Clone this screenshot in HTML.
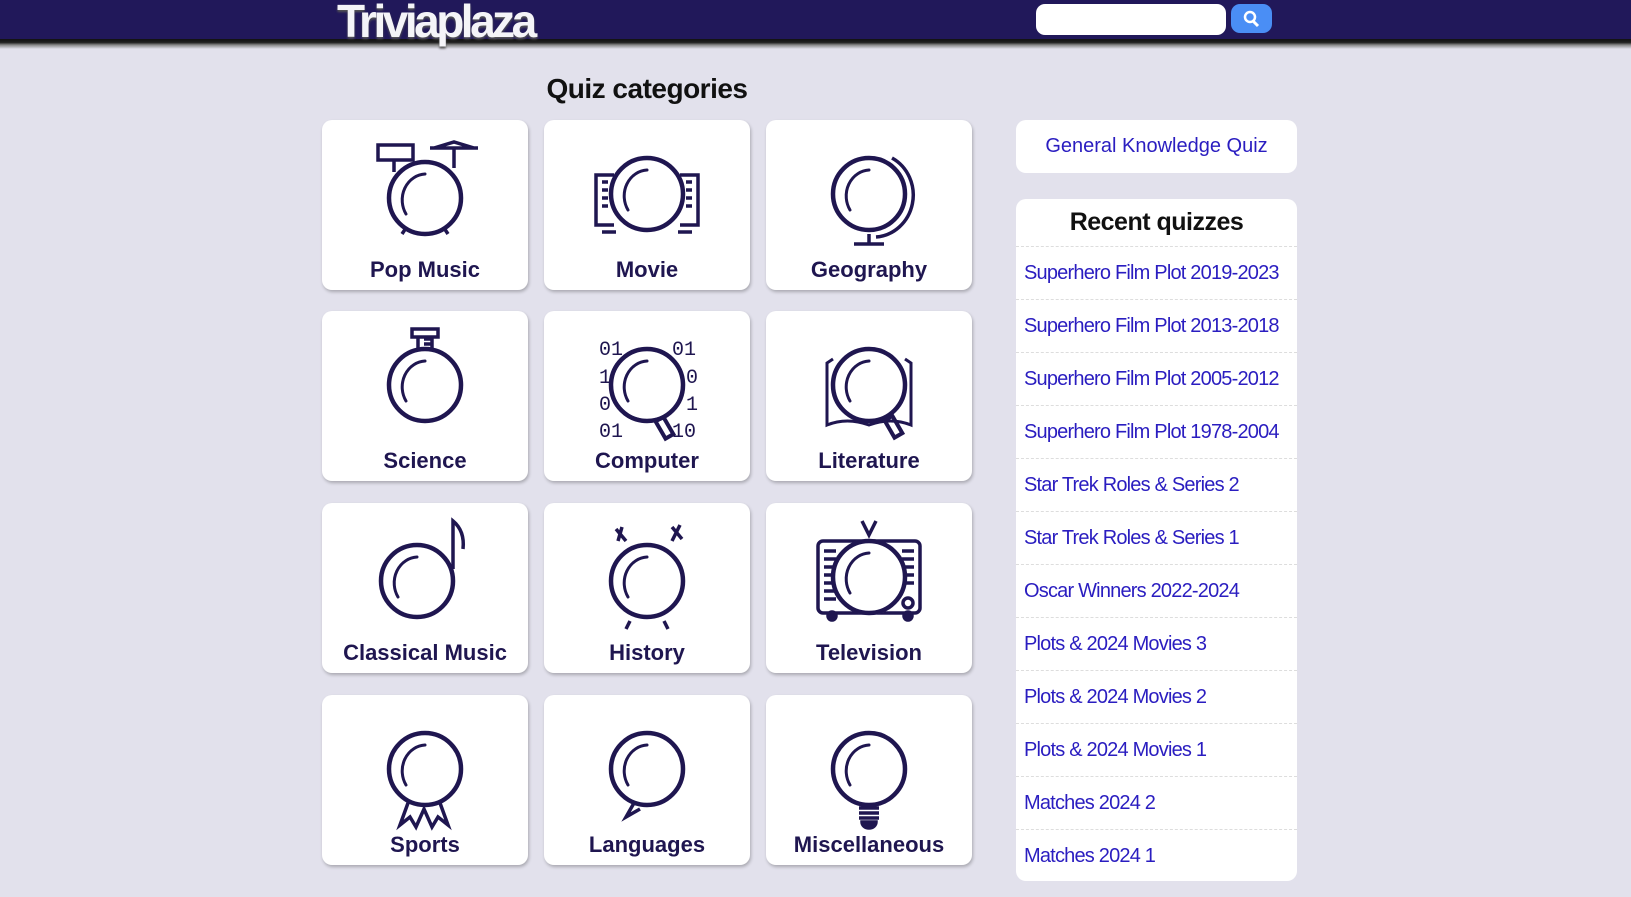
<!DOCTYPE html>
<html><head><meta charset="utf-8"><style>
*{box-sizing:border-box;margin:0;padding:0}
body{width:1631px;height:897px;background:#e2e1ec;font-family:"Liberation Sans",sans-serif;position:relative;overflow:hidden}
.hdr{position:absolute;left:0;top:0;width:1631px;height:39px;background:#21185a;}
.shd{position:absolute;left:0;top:39px;width:1631px;height:10px;background:linear-gradient(#111 0,#222 35%,#888 60%,#e2e1ec 100%)}
.logo{position:absolute;left:337px;top:-6px;font-size:46px;font-weight:bold;letter-spacing:-3.5px;color:#f4f4f8;text-shadow:0 2px 2px #555}
.search{position:absolute;left:1036px;top:4px;width:190px;height:31px;background:#fff;border-radius:9px}
.btn{position:absolute;left:1231px;top:4px;width:41px;height:29px;background:#4a8ef5;border-radius:9px}
h1{position:absolute;left:500px;width:294px;top:73px;text-align:center;font-size:28px;font-weight:bold;color:#111;letter-spacing:-0.5px}
.card{position:absolute;width:206px;height:170px;background:#fff;border-radius:10px;box-shadow:1px 2px 3px rgba(0,0,0,.25)}
.card svg{position:absolute;left:0;top:0}
.card span{position:absolute;left:0;width:206px;top:137px;text-align:center;font-size:22px;font-weight:bold;color:#1f1650}
.gk{position:absolute;left:1016px;top:120px;width:281px;height:53px;background:#fff;border-radius:10px;text-align:center;line-height:53px;font-size:20px;color:#2a1dc0}
.rq{position:absolute;left:1016px;top:199px;width:281px;height:682px;background:#fff;border-radius:10px}
.rq h2{height:47px;line-height:47px;text-align:center;font-size:25px;color:#111;font-weight:bold;letter-spacing:-0.5px}
.rq div{height:53px;line-height:53px;border-top:1px dashed #ddd;padding-left:8px;font-size:20px;color:#2a1dc0;letter-spacing:-0.8px;white-space:nowrap}
</style></head><body>
<div class="hdr"></div><div class="shd"></div>
<div class="logo">Triviaplaza</div>
<div class="search"></div>
<div class="btn"><svg width="41" height="29"><circle cx="19" cy="13" r="5" fill="none" stroke="#fff" stroke-width="2.5"/><line x1="22" y1="17" x2="27" y2="22" stroke="#fff" stroke-width="3"/></svg></div>
<h1>Quiz categories</h1>

<svg width="0" height="0" style="position:absolute"><defs>
<g id="o"><circle cx="103" cy="74" r="36" fill="none" stroke="#1f1650" stroke-width="4.5"/><path d="M84 90 A24 26 0 0 1 103 50" fill="none" stroke="#1f1650" stroke-width="3" stroke-linecap="round"/></g>
</defs></svg>

<div class="card" style="left:322px;top:120px"><svg width="206" height="140" fill="none" stroke="#1f1650" stroke-width="3.5"><g transform="translate(0,4)"><use href="#o"/></g><rect x="56" y="25" width="35" height="15"/><path d="M72 40v12M108 28h48M112 28l20-6 20 6M132 28v20M84 108l-4 6M122 108l4 6"/></svg><span>Pop Music</span></div>
<div class="card" style="left:544px;top:120px"><svg width="206" height="140" fill="none" stroke="#1f1650" stroke-width="3.5"><use href="#o"/><path d="M70 55H52v50h18M136 55h18v50h-18M58 62h6M58 70h6M58 78h6M58 86h6M142 62h6M142 70h6M142 78h6M142 86h6M58 112h14M134 112h14"/></svg><span>Movie</span></div>
<div class="card" style="left:766px;top:120px"><svg width="206" height="140" fill="none" stroke="#1f1650" stroke-width="3.5"><use href="#o"/><path d="M126 38A40 42 0 0 1 110 117M103 114v10M88 124h30"/></svg><span>Geography</span></div>

<div class="card" style="left:322px;top:311px"><svg width="206" height="140" fill="none" stroke="#1f1650" stroke-width="3.5"><use href="#o"/><path d="M90 18h26v8H90zM96 26v12M110 26v12M102 28h8M102 33h8"/></svg><span>Science</span></div>
<div class="card" style="left:544px;top:311px"><svg width="206" height="140" fill="none" stroke="#1f1650" stroke-width="4"><rect x="116" y="107" width="9" height="20" transform="rotate(-30 120 117)"/><g fill="#1f1650" stroke="none" font-family="Liberation Mono" font-size="20"><text x="55" y="44">01</text><text x="128" y="44">01</text><text x="55" y="72">1</text><text x="142" y="72">0</text><text x="55" y="99">0</text><text x="142" y="99">1</text><text x="55" y="126">01</text><text x="128" y="126">10</text></g><circle cx="103" cy="74" r="36" fill="#fff"/><use href="#o"/></svg><span>Computer</span></div>
<div class="card" style="left:766px;top:311px"><svg width="206" height="140" fill="none" stroke="#1f1650" stroke-width="3"><use href="#o"/><path d="M67 48l-6 4v62q20-8 42 0q22-8 42 0V52l-6-4"/><rect x="123" y="106" width="9" height="20" transform="rotate(-30 127 116)" stroke-width="4"/></svg><span>Literature</span></div>

<div class="card" style="left:322px;top:503px"><svg width="206" height="140" fill="none" stroke="#1f1650" stroke-width="3.5"><g transform="translate(-8,4)"><use href="#o"/></g><path d="M131 66V18q12 10 10 28"/></svg><span>Classical Music</span></div>
<div class="card" style="left:544px;top:503px"><svg width="206" height="140" fill="none" stroke="#1f1650" stroke-width="3.5"><g transform="translate(0,4)"><use href="#o"/></g><path d="M72 26l10 12M78 24l-4 14M128 24l10 12M136 22l-8 16M86 118l-4 8M120 118l4 8"/></svg><span>History</span></div>
<div class="card" style="left:766px;top:503px"><svg width="206" height="140" fill="none" stroke="#1f1650" stroke-width="3.5"><rect x="52" y="38" width="102" height="72" rx="5"/><path d="M58 48h12M58 56h12M58 64h12M58 72h12M58 80h12M58 88h12M58 96h12M136 48h12M136 56h12M136 64h12M136 72h12M136 80h12M96 18l7 14 7-14"/><circle cx="142" cy="100" r="5"/><circle cx="66" cy="113" r="4" fill="#1f1650"/><circle cx="142" cy="113" r="4" fill="#1f1650"/><circle cx="103" cy="74" r="38" fill="#fff" stroke="none"/><use href="#o"/></svg><span>Television</span></div>

<div class="card" style="left:322px;top:695px"><svg width="206" height="140" fill="none" stroke="#1f1650" stroke-width="3.5"><use href="#o"/><path d="M86 108l-8 22 10-8 6 10 8-18 8 18 6-10 10 8-8-22"/></svg><span>Sports</span></div>
<div class="card" style="left:544px;top:695px"><svg width="206" height="140" fill="none" stroke="#1f1650" stroke-width="3.5"><use href="#o"/><path d="M90 108l-8 14 14-8"/></svg><span>Languages</span></div>
<div class="card" style="left:766px;top:695px"><svg width="206" height="140" fill="none" stroke="#1f1650" stroke-width="3.5"><use href="#o"/><path d="M93 113h20M93 118h20M93 123h20"/><path d="M96 127h14a7 6 0 0 1-14 0z" fill="#1f1650"/></svg><span>Miscellaneous</span></div>

<div class="gk">General Knowledge Quiz</div>
<div class="rq"><h2>Recent quizzes</h2>
<div>Superhero Film Plot 2019-2023</div>
<div>Superhero Film Plot 2013-2018</div>
<div>Superhero Film Plot 2005-2012</div>
<div>Superhero Film Plot 1978-2004</div>
<div>Star Trek Roles &amp; Series 2</div>
<div>Star Trek Roles &amp; Series 1</div>
<div>Oscar Winners 2022-2024</div>
<div>Plots &amp; 2024 Movies 3</div>
<div>Plots &amp; 2024 Movies 2</div>
<div>Plots &amp; 2024 Movies 1</div>
<div>Matches 2024 2</div>
<div>Matches 2024 1</div>
</div>
</body></html>
